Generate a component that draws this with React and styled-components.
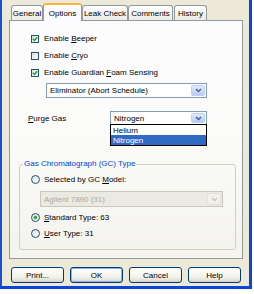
import React from 'react';
import styled, { createGlobalStyle } from 'styled-components';

const Global = createGlobalStyle`
  html, body {
    margin: 0;
    padding: 0;
    background: #ffffff;
  }
  body {
    font-family: "Liberation Sans", Arial, sans-serif;
    font-size: 8px;
    color: #000;
  }
`;

const Window = styled.div`
  width: 252px;
  height: 289px;
  box-sizing: border-box;
  background: #ece9d8;
  border-left: 2px solid #1c4fd8;
  border-right: 3px solid #0a46d4;
  border-bottom: 3px solid #0a46d4;
  padding: 3px 6px 0 7px;
  display: flex;
  flex-direction: column;
`;

const TabStrip = styled.div`
  display: flex;
  align-items: flex-end;
  height: 17px;
  padding-left: 2px;
  position: relative;
  z-index: 2;
`;

const Tab = styled.div`
  box-sizing: border-box;
  width: ${p => p.$w}px;
  height: ${p => (p.$active ? 18 : 15)}px;
  margin-bottom: ${p => (p.$active ? -1 : 0)}px;
  margin-right: ${p => p.$mr || 0}px;
  display: flex;
  align-items: center;
  justify-content: center;
  border: 1px solid #919b9c;
  border-bottom: none;
  border-radius: 3px 3px 0 0;
  background: ${p => (p.$active ? '#fcfcfe' : 'linear-gradient(#ffffff, #ecebe5)')};
  border-top: ${p => (p.$active ? '2px solid #f7b53a' : '1px solid #919b9c')};
  padding-top: ${p => (p.$active ? 0 : 1)}px;
  white-space: nowrap;
`;

const Panel = styled.div`
  box-sizing: border-box;
  width: 234px;
  height: 239px;
  border: 1px solid #919b9c;
  background: linear-gradient(#fcfcfe 0%, #fbfbf9 45%, #f4f3ee 100%);
  padding: 9px 0 0 0;
  display: flex;
  flex-direction: column;
`;

const CheckRow = styled.div`
  display: flex;
  align-items: center;
  height: 17px;
  padding-left: 21px;
  gap: 5px;
`;

const Box = styled.span`
  box-sizing: border-box;
  width: 8px;
  height: 8px;
  border: 1px solid #1c5180;
  background: linear-gradient(135deg, #dcdcd7, #ffffff);
  display: flex;
  align-items: center;
  justify-content: center;
`;

const U = styled.span`
  text-decoration: underline;
`;

const Combo = styled.div`
  position: relative;
  box-sizing: border-box;
  display: flex;
  align-items: center;
  width: ${p => p.$w}px;
  height: ${p => p.$h}px;
  margin-left: ${p => p.$ml || 0}px;
  margin-top: ${p => p.$mt || 0}px;
  border: 1px solid ${p => (p.$disabled ? '#c9c7ba' : '#7f9db9')};
  background: ${p => (p.$disabled ? '#ebeae2' : '#ffffff')};
  color: ${p => (p.$disabled ? '#aca899' : '#000')};
`;

const ComboText = styled.span`
  flex: 1;
  padding-left: 3px;
  white-space: nowrap;
`;

const ComboButton = styled.span`
  box-sizing: border-box;
  width: 14px;
  height: calc(100% - 2px);
  margin-right: 1px;
  border-radius: 2px;
  border: 1px solid ${p => (p.$disabled ? '#e3e1d6' : '#bccffa')};
  background: ${p => (p.$disabled ? '#f1f0ea' : 'linear-gradient(#e2ebfe, #b7cbf7)')};
  display: flex;
  align-items: center;
  justify-content: center;
`;

const DropList = styled.div`
  position: absolute;
  top: 100%;
  left: -1px;
  width: 97px;
  box-sizing: border-box;
  border: 1px solid #000;
  background: #fff;
  z-index: 3;
`;

const DropItem = styled.div`
  height: ${p => p.$h}px;
  display: flex;
  align-items: center;
  padding-left: 2px;
  background: ${p => (p.$sel ? '#316ac5' : 'transparent')};
  color: ${p => (p.$sel ? '#fff' : '#000')};
`;

const PurgeRow = styled.div`
  display: flex;
  align-items: center;
  margin-top: 13px;
  height: 14px;
`;

const PurgeLabel = styled.span`
  width: 100px;
  padding-left: 18px;
  box-sizing: border-box;
  white-space: nowrap;
`;

const Group = styled.fieldset`
  box-sizing: border-box;
  margin: 34px 0 0 9px;
  width: 217px;
  height: 91px;
  padding: 0;
  border: 1px solid #d0d0bf;
  border-radius: 3px;
  display: flex;
  flex-direction: column;
`;

const Legend = styled.legend`
  color: #0046d5;
  padding: 0 1px;
  margin-left: 3px;
  line-height: 10px;
`;

const RadioRow = styled.div`
  display: flex;
  align-items: center;
  height: 14px;
  padding-left: 11px;
  margin-top: ${p => p.$mt || 0}px;
  gap: 4px;
`;

const Radio = styled.span`
  box-sizing: border-box;
  width: 9px;
  height: 9px;
  border-radius: 50%;
  border: 1px solid #1c5180;
  background: radial-gradient(circle at 70% 70%, #ffffff, #dcdcd7);
  display: flex;
  align-items: center;
  justify-content: center;
  &::after {
    content: '';
    display: ${p => (p.$on ? 'block' : 'none')};
    width: 3px;
    height: 3px;
    border-radius: 50%;
    background: #2ca52c;
    box-shadow: 0 0 0 0.6px #7fd07f;
  }
`;

const Buttons = styled.div`
  display: flex;
  gap: 6px;
  margin-top: 8px;
  padding-left: 2px;
`;

const Button = styled.div`
  box-sizing: border-box;
  width: 53px;
  height: 16px;
  border: 1px solid #003c74;
  border-radius: 3px;
  background: linear-gradient(#ffffff, #f0f0ea 70%, #d6d0c5);
  display: flex;
  align-items: center;
  justify-content: center;
  box-shadow: ${p => (p.$default ? 'inset 0 0 0 1px #8fb2ee' : 'none')};
`;

const Check = () => (
  <svg width="6" height="6" viewBox="0 0 6 6">
    <path d="M0.8 2.8 L2.4 4.4 L5.2 1.2" fill="none" stroke="#21a121" strokeWidth="1.4" />
  </svg>
);

const Chevron = ({ color }) => (
  <svg width="7" height="5" viewBox="0 0 7 5">
    <path d="M1 1 L3.5 3.5 L6 1" fill="none" stroke={color} strokeWidth="1.5" />
  </svg>
);

const CheckItem = ({ on, children }) => (
  <CheckRow>
    <Box>{on && <Check />}</Box>
    <span>{children}</span>
  </CheckRow>
);

export default function App() {
  return (
    <>
      <Global />
      <Window>
        <TabStrip>
          <Tab $w={32}>General</Tab>
          <Tab $w={39} $active>Options</Tab>
          <Tab $w={46}>Leak Check</Tab>
          <Tab $w={45} $mr={1}>Comments</Tab>
          <Tab $w={33}>History</Tab>
        </TabStrip>
        <Panel>
          <CheckItem on>Enable <U>B</U>eeper</CheckItem>
          <CheckItem>Enable <U>C</U>ryo</CheckItem>
          <CheckItem on>Enable Guardian <U>F</U>oam Sensing</CheckItem>
          <Combo $w={161} $h={15} $ml={36} $mt={2}>
            <ComboText>Eliminator (Abort Schedule)</ComboText>
            <ComboButton><Chevron color="#4d6185" /></ComboButton>
          </Combo>
          <PurgeRow>
            <PurgeLabel><U>P</U>urge Gas</PurgeLabel>
            <Combo $w={97} $h={14}>
              <ComboText>Nitrogen</ComboText>
              <ComboButton><Chevron color="#4d6185" /></ComboButton>
              <DropList>
                <DropItem $h={10}>Helium</DropItem>
                <DropItem $h={10} $sel>Nitrogen</DropItem>
              </DropList>
            </Combo>
          </PurgeRow>
          <Group>
            <Legend>Gas Chromatograph (GC) Type</Legend>
            <RadioRow $mt={3}>
              <Radio />
              <span>Selected by GC <U>M</U>odel:</span>
            </RadioRow>
            <Combo $w={183} $h={16} $ml={20} $mt={5} $disabled>
              <ComboText>Agilent 7890 (31)</ComboText>
              <ComboButton $disabled><Chevron color="#c9c7ba" /></ComboButton>
            </Combo>
            <RadioRow $mt={3}>
              <Radio $on />
              <span><U>S</U>tandard Type: 63</span>
            </RadioRow>
            <RadioRow $mt={2}>
              <Radio />
              <span><U>U</U>ser Type: 31</span>
            </RadioRow>
          </Group>
        </Panel>
        <Buttons>
          <Button>Print...</Button>
          <Button $default>OK</Button>
          <Button>Cancel</Button>
          <Button>Help</Button>
        </Buttons>
      </Window>
    </>
  );
}
